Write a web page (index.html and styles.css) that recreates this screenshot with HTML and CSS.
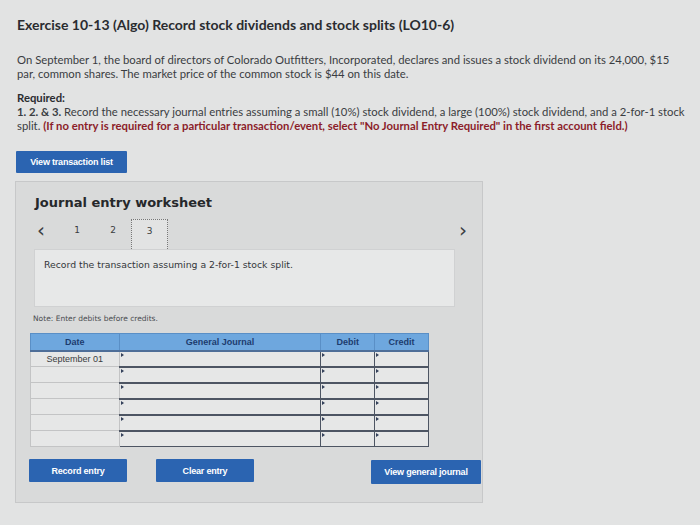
FILE: index.html
```html
<!DOCTYPE html>
<html>
<head>
<meta charset="utf-8">
<link rel="stylesheet" href="styles.css">
</head>
<body>
<div class="page">
  <h1 class="title">Exercise 10-13 (Algo) Record stock dividends and stock splits (LO10-6)</h1>
  <p class="intro">On September 1, the board of directors of Colorado Outfitters, Incorporated, declares and issues a stock dividend on its 24,000, $15 par, common shares. The market price of the common stock is $44 on this date.</p>
  <div class="required">
    <div class="req-label">Required:</div>
    <div class="req-line"><b>1. 2. &amp; 3.</b> Record the necessary journal entries assuming a small (10%) stock dividend, a large (100%) stock dividend, and a 2-for-1 stock</div>
    <div class="req-line">split. <span class="warn">(If no entry is required for a particular transaction/event, select "No Journal Entry Required" in the first account field.)</span></div>
  </div>
  <button class="btn btn-list">View transaction list</button>

  <div class="panel">
    <h2 class="ws-title">Journal entry worksheet</h2>
    <div class="nav">
      <span class="arrow">&lsaquo;</span>
      <span class="tab">1</span>
      <span class="tab">2</span>
      <span class="tab active">3</span>
      <span class="spacer"></span>
      <span class="arrow right">&rsaquo;</span>
    </div>
    <div class="desc">Record the transaction assuming a 2-for-1 stock split.</div>
    <div class="note">Note: Enter debits before credits.</div>
    <table class="journal">
      <thead>
        <tr><th class="c-date">Date</th><th class="c-gj">General Journal</th><th class="c-amt">Debit</th><th class="c-amt">Credit</th></tr>
      </thead>
      <tbody>
        <tr><td class="d">September 01</td><td class="in"></td><td class="in"></td><td class="in"></td></tr>
        <tr><td class="d"></td><td class="in"></td><td class="in"></td><td class="in"></td></tr>
        <tr><td class="d"></td><td class="in"></td><td class="in"></td><td class="in"></td></tr>
        <tr><td class="d"></td><td class="in"></td><td class="in"></td><td class="in"></td></tr>
        <tr><td class="d"></td><td class="in"></td><td class="in"></td><td class="in"></td></tr>
        <tr><td class="d"></td><td class="in"></td><td class="in"></td><td class="in"></td></tr>
      </tbody>
    </table>
    <div class="actions">
      <button class="btn btn-rec">Record entry</button>
      <button class="btn btn-clear">Clear entry</button>
      <span class="spacer"></span>
      <button class="btn btn-view">View general journal</button>
    </div>
  </div>
</div>
</body>
</html>
```
FILE: styles.css
```css
* { box-sizing: border-box; }
html, body { margin: 0; padding: 0; }
body {
  background: #e2e3e3;
  width: 700px;
  height: 525px;
  overflow: hidden;
  font-family: "Lato", "Liberation Sans", sans-serif;
  color: #2b2d30;
}
.page { padding: 17px 0 0 17px; }
.title {
  margin: 0;
  font-size: 14px;
  font-weight: 700;
  color: #2a2c30;
  line-height: 16px;
}
.intro {
  margin: 20px 12px 0 0;
  font-size: 11.3px;
  line-height: 14px;
  color: #3a3d42;
}
.required {
  margin-top: 10px;
  font-size: 11.3px;
  line-height: 14px;
  color: #3a3d42;
}
.req-line { white-space: nowrap; }
.req-label { font-weight: 700; color: #2a2c30; }
.warn { color: #8c1d2a; font-weight: 700; }
.btn {
  display: block;
  border: none;
  background: #2b64b1;
  color: #fff;
  font-family: "Liberation Sans", Arial, sans-serif;
  font-weight: 700;
  font-size: 9px;
  letter-spacing: -0.2px;
  border-radius: 1px;
  padding: 0;
}
.btn-list { margin-top: 18px; margin-left: -1px; width: 111px; height: 22px; }
.panel {
  margin: 8px 0 0 -2px;
  width: 468px;
  height: 322px;
  background: #d9dada;
  border: 1px solid #c7c8c9;
  padding: 0 0 0 17px;
  font-family: "DejaVu Sans", Verdana, sans-serif;
}
.ws-title {
  margin: 12px 0 0 2px;
  font-size: 13px;
  font-weight: 700;
  color: #26282b;
  line-height: 17px;
}
.nav {
  display: flex;
  align-items: flex-start;
  height: 30px;
  margin-top: 8px;
  width: 440px;
  font-size: 9px;
  line-height: 11px;
  color: #3a3c40;
}
.nav > span { padding-top: 6px; }
.arrow { font-size: 20px; line-height: 14px; color: #3c3f44; width: 14px; margin-left: 4px; }
.nav > .arrow { padding-top: 4px; }
.arrow.right { margin-left: 0; }
.tab { width: 36px; text-align: center; }
.tab:nth-child(2) { margin-left: 8px; }
.tab.active {
  width: 37px;
  height: 30px;
  border: 1px dotted #777;
  border-bottom: none;
  background: #e2e3e3;
  margin-left: 0;
}
.nav > .tab.active { padding-top: 6px; }
.spacer { flex: 1; }
.desc {
  margin-left: 1px;
  width: 421px;
  height: 58px;
  background: #e7e8e8;
  border: 1px solid #d0d1d2;
  padding: 9px 0 0 9px;
  font-size: 9.3px;
  color: #33363a;
}
.note {
  margin-top: 7px;
  font-size: 7.5px;
  line-height: 9px;
  color: #4a4c50;
}
.journal {
  margin-top: 10px;
  margin-left: -3px;
  border-collapse: collapse;
  width: 399px;
  font-family: "Liberation Sans", Arial, sans-serif;
}
.journal th {
  background: #6ea7de;
  color: #1d3c6e;
  font-size: 9px;
  font-weight: 700;
  height: 17px;
  padding: 0;
  border: 1px solid #5a8fc6;
  border-bottom: 2px solid #4e6e98;
}
.c-date { width: 89px; }
.c-gj { width: 203px; }
.c-amt { width: 54px; }
.journal td {
  height: 16px;
  padding: 0;
  background: #e6e7e7;
}
.journal td.d {
  border: 1px solid #c3c4c5;
  font-size: 9px;
  color: #3a3c40;
  text-align: center;
}
.journal td.in {
  border: 1px solid #4d5563;
  border-top: 2px solid #4d5563;
  position: relative;
}
.journal td.in::before {
  content: "";
  position: absolute;
  left: 1px;
  top: 1px;
  border-left: 3px solid #33405a;
  border-top: 2px solid transparent;
  border-bottom: 2px solid transparent;
}
.actions {
  display: flex;
  margin-top: 12px;
  margin-left: -4px;
  width: 452px;
}
.btn-rec, .btn-clear { width: 98px; height: 23px; }
.btn-clear { margin-left: 29px; }
.btn-view { width: 110px; height: 24px; margin-top: 1px; }
```
